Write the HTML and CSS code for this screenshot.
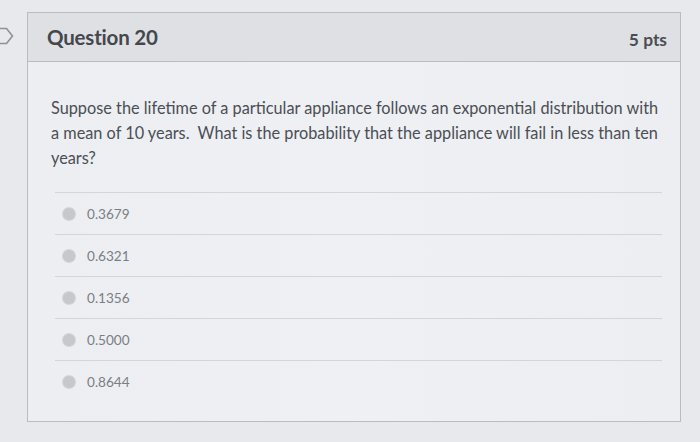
FILE: index.html
```html
<!DOCTYPE html>
<html lang="en">
<head>
<meta charset="utf-8">
<title>Question 20</title>
<link rel="stylesheet" href="styles.css">
</head>
<body>
<div class="page">
  <div class="flag">
    <svg width="14" height="18" viewBox="0 0 14 18"><path d="M-4 1.5 H6.5 L12.5 9 L6.5 16.5 H-4" fill="none" stroke="#8e9297" stroke-width="1.6" stroke-linejoin="round"/></svg>
  </div>
  <div class="card">
    <div class="card-header">
      <span class="q-title">Question 20</span>
      <span class="q-pts">5 pts</span>
    </div>
    <div class="card-body">
      <p class="q-text">Suppose the lifetime of a particular appliance follows an exponential distribution with a mean of 10 years.&nbsp; What is the probability that the appliance will fail in less than ten years?</p>
      <ul class="answers">
        <li class="answer"><span class="radio"></span><span class="label">0.3679</span></li>
        <li class="answer"><span class="radio"></span><span class="label">0.6321</span></li>
        <li class="answer"><span class="radio"></span><span class="label">0.1356</span></li>
        <li class="answer"><span class="radio"></span><span class="label">0.5000</span></li>
        <li class="answer"><span class="radio"></span><span class="label">0.8644</span></li>
      </ul>
    </div>
  </div>
</div>
</body>
</html>
```

FILE: styles.css
```css
html, body {
  margin: 0;
  padding: 0;
}
body {
  background: #e7e9ec;
  font-family: Lato, "Open Sans", "Liberation Sans", sans-serif;
  width: 700px;
  height: 442px;
  overflow: hidden;
}
.page {
  display: flex;
  align-items: flex-start;
  padding-top: 12px;
}
.flag {
  width: 14px;
  margin-top: 15px;
  display: flex;
}
.card {
  margin-left: 13px;
  width: 654px;
  height: 410px;
  border: 1px solid #b9bcc0;
  background: linear-gradient(90deg, #eceef1 0%, #eef0f3 50%, #eceef1 100%);
  box-sizing: border-box;
}
.card-header {
  height: 49px;
  box-sizing: border-box;
  background: #dfe0e3;
  border-bottom: 1px solid #b9bcc0;
  display: flex;
  align-items: center;
  justify-content: space-between;
  padding: 0 13px 0 19px;
}
.q-title {
  font-size: 20.5px;
  font-weight: 700;
  color: #44474e;
  letter-spacing: -0.2px;
}
.q-pts {
  font-size: 17.4px;
  font-weight: 700;
  color: #4a4d53;
  margin-top: 4px;
}
.card-body {
  padding: 33px 18px 0 23px;
}
.q-text {
  margin: 0;
  font-size: 16.3px;
  line-height: 25px;
  color: #4b4e55;
}
.answers {
  list-style: none;
  margin: 22px 0 0 4px;
  padding: 0;
}
.answer {
  display: flex;
  align-items: center;
  gap: 12px;
  height: 42px;
  border-top: 1px solid #d3d5d9;
  padding-left: 8px;
  box-sizing: border-box;
}
.radio {
  width: 12px;
  height: 12px;
  border-radius: 50%;
  background: #c6c8cb;
  box-shadow: 0 0 0 1px #d3d5d8;
  flex: none;
}
.label {
  font-size: 13.6px;
  color: #7b7e84;
}
```
